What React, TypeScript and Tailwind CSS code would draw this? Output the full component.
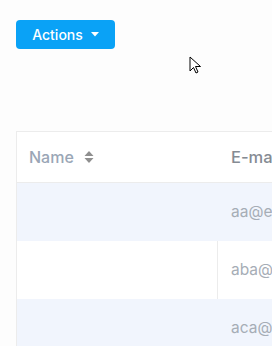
import React from "react";

export default function App() {
  const rows = [
    { email: "aa@example.com", bg: "bg-[#f1f5fd]" },
    { email: "aba@example.com", bg: "bg-white" },
    { email: "aca@example.com", bg: "bg-[#f1f5fd]" },
  ];
  return (
    <div
      className="relative w-[272px] h-[346px] overflow-hidden bg-[#fdfdfd]"
      style={{ fontFamily: "Inter, 'Noto Sans', sans-serif" }}
    >
      <div className="pt-[20px] pl-[16px]">
        <button className="flex items-center gap-[8px] h-[29px] w-[99px] justify-center rounded-[4px] bg-[#0aa2f6] text-white text-[14px] font-medium">
          Actions
          <svg width="8" height="5" viewBox="0 0 8 5">
            <path d="M0 0 L8 0 L4 4.5 Z" fill="white" />
          </svg>
        </button>
      </div>
      <div className="mt-[82px] ml-[16px] w-[400px] border-l border-t border-[#ececec]">
        <div className="flex h-[51px] bg-white border-b border-[#ececec]">
          <div className="w-[201px] flex items-center pl-[12px] gap-[10px] text-[16px] font-medium text-[#9aa6b6]">
            Name
            <svg width="10" height="14" viewBox="0 0 10 14">
              <path d="M0.5 6 L9.5 6 L5 1 Z" fill="#8f8f8f" />
              <path d="M0.5 8 L9.5 8 L5 13 Z" fill="#8f8f8f" />
            </svg>
          </div>
          <div className="flex-1 flex items-center pl-[13px] text-[16.5px] font-medium text-[#858b93]">
            E-mail
          </div>
        </div>
        {rows.map((r, i) => (
          <div key={i} className={`flex h-[58px] ${r.bg}`}>
            <div className={`w-[201px] ${i === 1 ? "border-r border-[#ececec]" : ""}`}></div>
            <div className="flex-1 flex items-center pl-[13px] text-[15.5px] text-[#a6adb6]">
              {r.email}
            </div>
          </div>
        ))}
      </div>
      <svg
        className="absolute left-[189px] top-[56px]"
        width="14"
        height="20"
        viewBox="0 0 14 20"
      >
        <path
          d="M1 1 L1 15 L4.5 11.5 L7 17 L9 16 L6.5 10.5 L11.5 10.5 Z"
          fill="white"
          stroke="black"
          strokeWidth="1"
          strokeLinejoin="round"
        />
      </svg>
    </div>
  );
}
